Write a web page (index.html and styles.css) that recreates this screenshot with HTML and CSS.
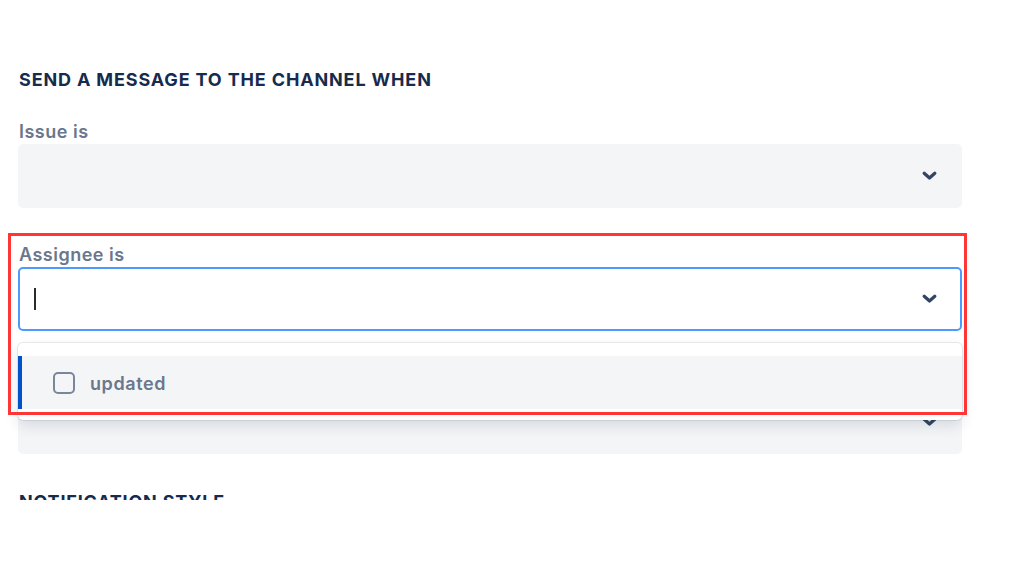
FILE: index.html
```html
<!DOCTYPE html>
<html lang="en">
<head>
<meta charset="utf-8">
<title>Channel notification settings</title>
<link rel="stylesheet" href="styles.css">
</head>
<body>
<div class="viewport">
  <div class="form">
    <h2 class="section-title">Send a message to the channel when</h2>

    <div class="field">
      <label class="field-label">Issue is</label>
      <div class="select">
        <span class="select-value"></span>
        <svg class="chevron" width="15" height="10" viewBox="0 0 15 10"><path d="M2.2 2.2l5.3 4.8 5.3-4.8" fill="none" stroke="#344563" stroke-width="3.2" stroke-linecap="round" stroke-linejoin="round"/></svg>
      </div>
    </div>

    <div class="field field-open">
      <label class="field-label">Assignee is</label>
      <div class="select select-focused">
        <span class="caret"></span>
        <svg class="chevron" width="15" height="10" viewBox="0 0 15 10"><path d="M2.2 2.2l5.3 4.8 5.3-4.8" fill="none" stroke="#344563" stroke-width="3.2" stroke-linecap="round" stroke-linejoin="round"/></svg>
      </div>
      <div class="menu">
        <div class="option option-active">
          <span class="checkbox"></span>
          <span class="option-label">updated</span>
        </div>
      </div>
    </div>

    <div class="field">
      <label class="field-label">Status is</label>
      <div class="select">
        <span class="select-value"></span>
        <svg class="chevron" width="15" height="10" viewBox="0 0 15 10"><path d="M2.2 2.2l5.3 4.8 5.3-4.8" fill="none" stroke="#344563" stroke-width="3.2" stroke-linecap="round" stroke-linejoin="round"/></svg>
      </div>
    </div>

    <h2 class="section-title section-title-next">Notification style</h2>
  </div>
  <div class="annotation"></div>
</div>
</body>
</html>
```

FILE: styles.css
```css
* { box-sizing: border-box; }

html, body {
  margin: 0;
  padding: 0;
  background: #ffffff;
}

body {
  font-family: Inter, "Noto Sans", "Liberation Sans", sans-serif;
  color: #172B4D;
}

.viewport {
  position: relative;
  width: 1024px;
  height: 500px;
  overflow: hidden;
}

.form {
  width: 980px;
  padding: 69px 0 0 18px;
}

.section-title {
  margin: 0;
  font-size: 18px;
  line-height: 22px;
  font-weight: 700;
  letter-spacing: 0.85px;
  text-transform: uppercase;
  color: #172B4D;
  padding-left: 1px;
}

.section-title-next {
  margin-top: 37px;
  letter-spacing: 0.8px;
}

.field {
  position: relative;
  width: 944px;
  margin-top: 35px;
}

.section-title + .field {
  margin-top: 29px;
}

.field-label {
  display: block;
  font-size: 18px;
  line-height: 22px;
  font-weight: 600;
  letter-spacing: 0.5px;
  color: #6B778C;
  padding: 1px 0 0 1px;
  margin-bottom: 1px;
}

.select {
  height: 64px;
  border-radius: 5px;
  background: #F4F5F7;
  display: flex;
  align-items: center;
  justify-content: space-between;
  padding: 0 23px 0 14px;
  border: 2px solid transparent;
}

.select-focused {
  background: #ffffff;
  border-color: #4C9AFF;
}

.caret {
  display: block;
  width: 2px;
  height: 22px;
  background: #2b2b2b;
}

.chevron {
  display: block;
  flex: none;
}

.menu {
  position: absolute;
  left: 0;
  right: 0;
  top: calc(100% + 12px);
  z-index: 2;
  background: #ffffff;
  border-radius: 5px;
  padding: 13px 0 11px;
  box-shadow: 0 0 0 1px rgba(9, 30, 66, 0.09), 0 6px 14px rgba(9, 30, 66, 0.12);
}

.option {
  height: 53px;
  display: flex;
  align-items: center;
  gap: 15px;
  padding-left: 31px;
  background: #F4F5F7;
  border-left: 4px solid #0052CC;
}

.checkbox {
  width: 22px;
  height: 22px;
  border: 2.5px solid #7A869A;
  border-radius: 5px;
  background: #F4F5F7;
}

.option-label {
  font-size: 18px;
  font-weight: 600;
  letter-spacing: 0.6px;
  color: #6B778C;
  padding-top: 1px;
}

.annotation {
  position: absolute;
  left: 8px;
  top: 233px;
  width: 959px;
  height: 182px;
  border: 3.5px solid #FF3636;
  z-index: 3;
  pointer-events: none;
}
```
